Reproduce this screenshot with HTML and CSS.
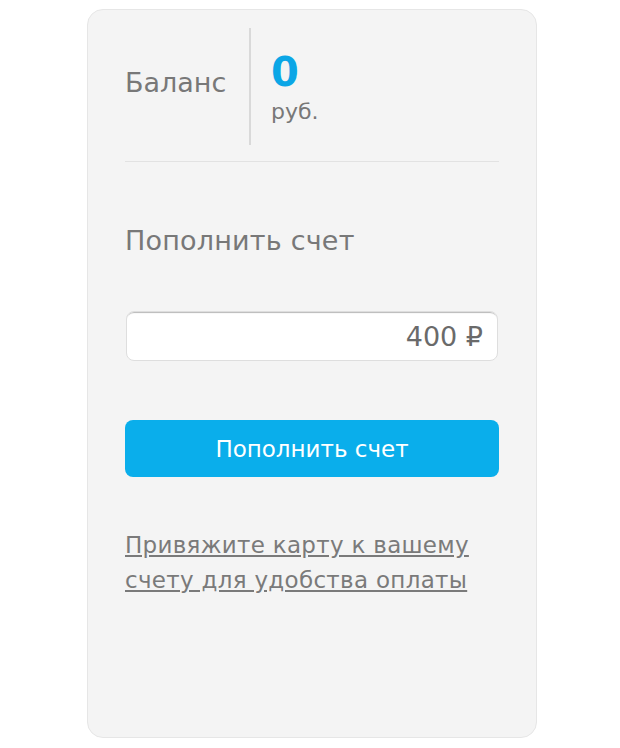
FILE: index.html
```html
<!DOCTYPE html>
<html lang="ru">
<head>
<meta charset="utf-8">
<link rel="stylesheet" href="styles.css">
</head>
<body>
<div class="card">
  <div class="balance">
    <div class="balance-label">Баланс</div>
    <div class="balance-value">
      <div class="amount">0</div>
      <div class="currency">руб.</div>
    </div>
  </div>
  <div class="divider"></div>
  <div class="title">Пополнить счет</div>
  <div class="field"><span>400 ₽</span></div>
  <button class="pay">Пополнить счет</button>
  <a class="link" href="#">Привяжите карту к вашему счету для удобства оплаты</a>
</div>
</body>
</html>
```
FILE: styles.css
```css
html, body {
  margin: 0;
  padding: 0;
  background: #ffffff;
}
body {
  font-family: "DejaVu Sans", Verdana, sans-serif;
  color: #787878;
}
.card {
  box-sizing: border-box;
  width: 450px;
  height: 729px;
  margin: 9px 0 0 87px;
  padding: 0 37px;
  background: #f4f4f4;
  border: 1px solid #e6e6e6;
  border-radius: 16px;
  display: flex;
  flex-direction: column;
}
.balance {
  display: flex;
  height: 117px;
  margin-top: 18px;
}
.balance-label {
  width: 126px;
  border-right: 2px solid #d9d9d9;
  font-size: 27px;
  line-height: 27px;
  padding-top: 41px;
  box-sizing: border-box;
}
.balance-value {
  padding: 24px 0 0 20px;
}
.amount {
  font-size: 40px;
  line-height: 40px;
  font-weight: bold;
  color: #0ba6e6;
}
.currency {
  font-size: 22px;
  line-height: 22px;
  margin-top: 9px;
}
.divider {
  height: 1px;
  background: #e2e2e2;
  margin-top: 16px;
}
.title {
  font-size: 27px;
  line-height: 26px;
  margin-top: 66px;
  letter-spacing: 0.2px;
}
.field {
  margin-top: 57px;
  height: 50px;
  box-sizing: border-box;
  margin-left: 1px;
  margin-right: 1px;
  background: #ffffff;
  border: 1px solid #dedede;
  border-radius: 8px;
  box-shadow: inset 0 2px 1px -1px #b9b9b9;
  display: flex;
  align-items: center;
  justify-content: flex-end;
  padding-right: 14px;
  font-size: 27px;
  color: #6a6a6a;
}
.pay {
  margin-top: 59px;
  height: 57px;
  border: none;
  border-radius: 8px;
  background: #0aaeeb;
  color: #ffffff;
  font-family: "DejaVu Sans", Verdana, sans-serif;
  font-size: 23px;
  padding: 0;
}
.link {
  margin-top: 51px;
  font-size: 23px;
  line-height: 35px;
  color: #7a7a7a;
  letter-spacing: 0.3px;
  text-decoration: underline;
  text-underline-offset: 2px;
}
```
